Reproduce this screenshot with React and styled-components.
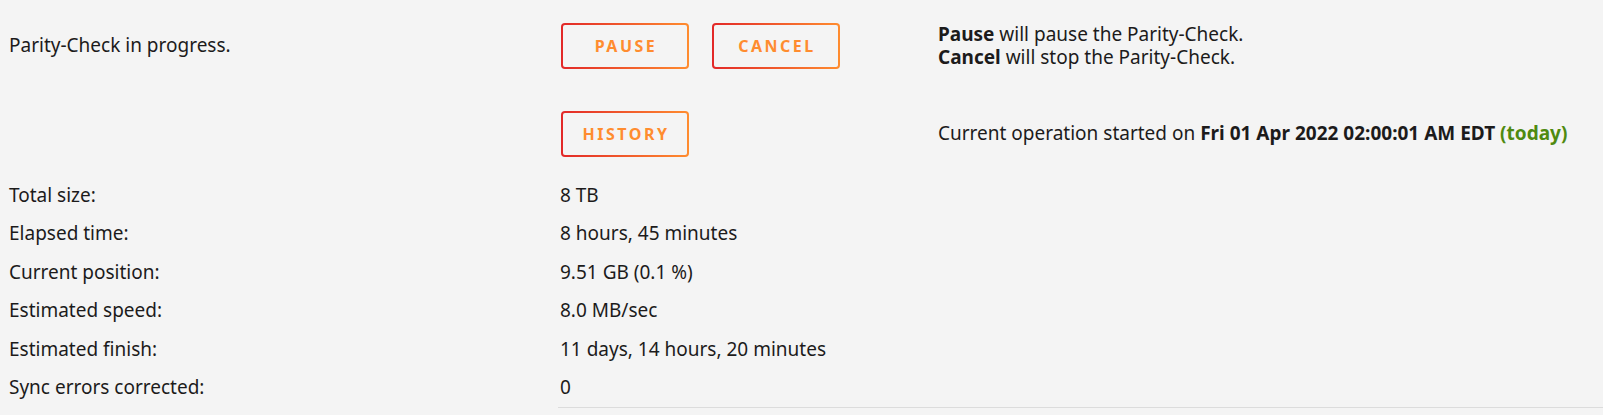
import React from "react";
import styled, { createGlobalStyle } from "styled-components";

const GlobalStyle = createGlobalStyle`
  html, body {
    margin: 0;
    padding: 0;
    background: #f4f4f4;
  }
  body {
    font-family: "Noto Sans", "Open Sans", sans-serif;
    font-size: 19px;
    color: #1c1b1b;
  }
`;

const Page = styled.div`
  width: 1603px;
  height: 415px;
  background: #f4f4f4;
  overflow: hidden;
`;

const Row = styled.div`
  display: grid;
  grid-template-columns: 550px 380px 1fr;
  align-items: center;
  padding-left: 8px;
  height: ${(p) => p.h}px;
`;

const Cell = styled.div`
  display: flex;
  align-items: center;
  gap: ${(p) => p.gap || 0}px;
  padding-left: ${(p) => p.pad || 0}px;
  line-height: 23px;
  white-space: nowrap;
`;

const Note = styled.div`
  line-height: 23px;
  white-space: nowrap;
`;

const Button = styled.button`
  width: 128px;
  height: 46px;
  margin: 0;
  border: 2px solid transparent;
  border-radius: 4px;
  background:
    linear-gradient(#f4f4f4, #f4f4f4) padding-box,
    linear-gradient(90deg, #e22828, #ff8c2f) border-box;
  color: #ff8c2f;
  font-family: "Noto Sans", "Open Sans", sans-serif;
  font-size: 16px;
  font-weight: 700;
  letter-spacing: 2.5px;
  text-transform: uppercase;
  padding: 0 0 0 2px;
  cursor: pointer;
`;

const Strong = styled.b`
  font-weight: 700;
`;

const Green = styled.span`
  color: #4f8a10;
  font-weight: 700;
`;

const Rule = styled.div`
  margin-left: 558px;
  border-top: 1px solid #dcdcdc;
`;

const stats = [
  ["Total size:", "8 TB"],
  ["Elapsed time:", "8 hours, 45 minutes"],
  ["Current position:", "9.51 GB (0.1 %)"],
  ["Estimated speed:", "8.0 MB/sec"],
  ["Estimated finish:", "11 days, 14 hours, 20 minutes"],
  ["Sync errors corrected:", "0"],
];

export default function App() {
  return (
    <Page>
      <GlobalStyle />
      <Row h={91}>
        <Cell pad={1}>Parity-Check in progress.</Cell>
        <Cell gap={23} pad={3}>
          <Button>Pause</Button>
          <Button>Cancel</Button>
        </Cell>
        <div>
          <Note>
            <Strong>Pause</Strong> will pause the Parity-Check.
          </Note>
          <Note>
            <Strong>Cancel</Strong> will stop the Parity-Check.
          </Note>
        </div>
      </Row>
      <Row h={85}>
        <Cell />
        <Cell pad={3}>
          <Button>History</Button>
        </Cell>
        <Cell>
          Current operation started on&nbsp;
          <Strong>Fri 01 Apr 2022 02:00:01 AM EDT</Strong>&nbsp;
          <Green>(today)</Green>
        </Cell>
      </Row>
      {stats.map(([label, value]) => (
        <Row h={38.5} key={label}>
          <Cell pad={1}>{label}</Cell>
          <Cell pad={2}>{value}</Cell>
          <Cell />
        </Row>
      ))}
      <Rule />
    </Page>
  );
}
